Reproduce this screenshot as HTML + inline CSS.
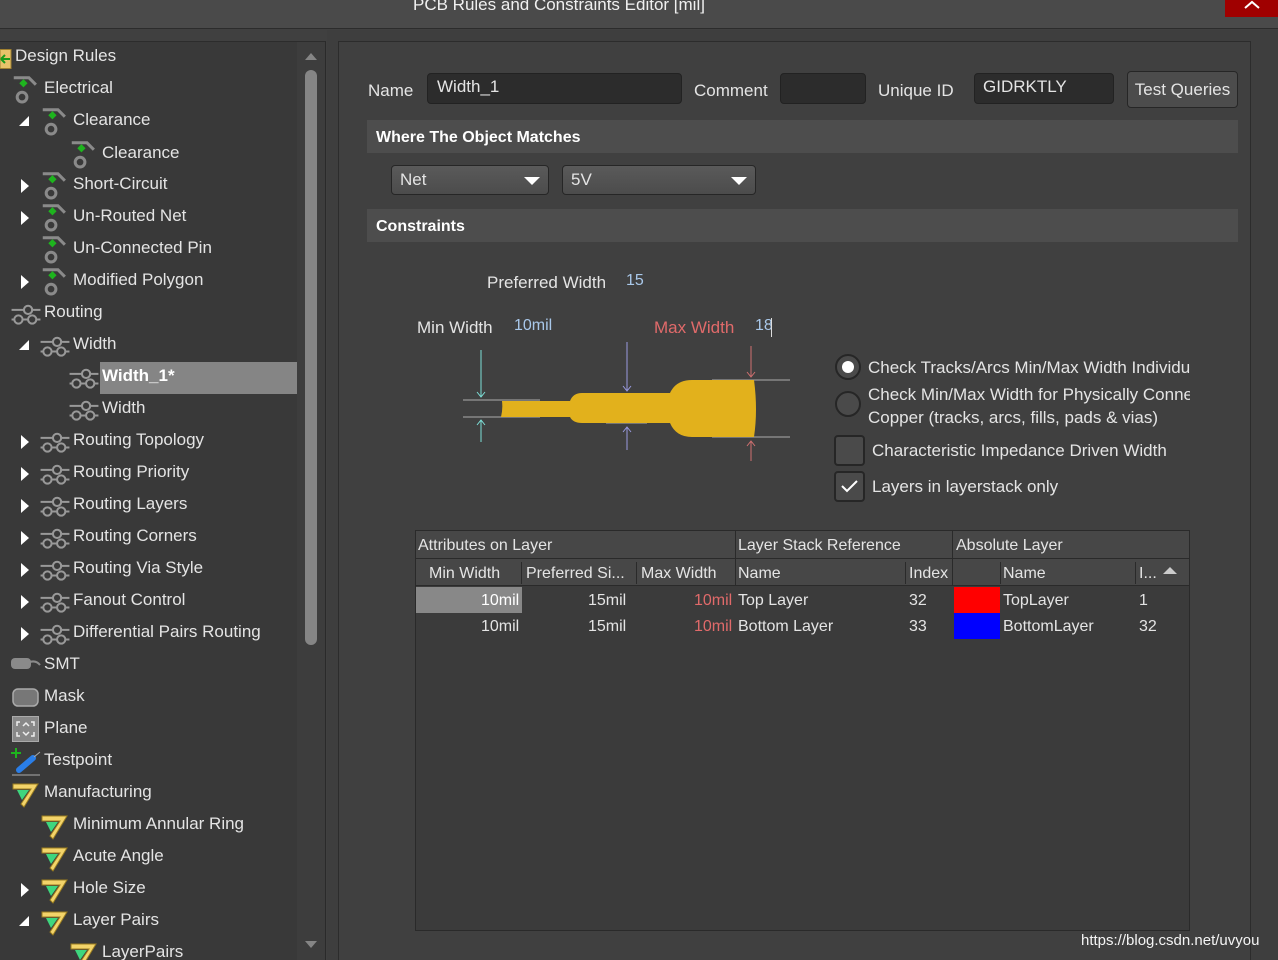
<!DOCTYPE html>
<html><head><meta charset="utf-8"><style>
*{margin:0;padding:0;box-sizing:border-box}
html,body{width:1278px;height:960px;overflow:hidden}
body{background:#404040;font-family:"Segoe UI","Liberation Sans",sans-serif;color:#e4e4e4;position:relative;font-size:16px}
.a{position:absolute;white-space:nowrap}
.t{position:absolute;white-space:nowrap;font-size:17px;line-height:20px;margin-top:1px}
.tri{position:absolute;width:0;height:0}
.tr{border-left:8px solid #fff;border-top:7px solid transparent;border-bottom:7px solid transparent}
.td{border-right:10px solid #fff;border-top:10px solid transparent}
.inp{position:absolute;background:#2c2c2c;border:1px solid #222;border-radius:4px}
.hdr{position:absolute;left:367px;width:871px;height:33px;background:#4d4d4d;font-weight:bold;font-size:16px;padding-left:9px;line-height:33px;color:#fff}
.dd{position:absolute;height:30px;border:1px solid #262626;border-radius:4px;background:linear-gradient(#5a5a5a,#4c4c4c);font-size:17px;line-height:28px;padding-left:8px}
.dd:after{content:"";position:absolute;right:8px;top:11px;border-left:8px solid transparent;border-right:8px solid transparent;border-top:8px solid #fff}
.c{position:absolute;font-size:16px;line-height:27px;white-space:nowrap}
</style></head><body>
<svg width="0" height="0" style="position:absolute">
<defs>
<g id="el"><path d="M1 2 H12 L17 7" stroke="#8a8a8a" stroke-width="2.2" fill="none"/><path d="M8 3 l3 3 -3 3 -3 -3z" fill="#1eb41e"/><circle cx="7" cy="16" r="3.5" fill="none" stroke="#8a8a8a" stroke-width="2.2"/></g>
<g id="ro"><path d="M1 5H22M1 12H22" stroke="#999" stroke-width="1.5"/><circle cx="13" cy="5" r="3" fill="#393939" stroke="#999" stroke-width="1.5"/><circle cx="6" cy="12" r="3" fill="#393939" stroke="#999" stroke-width="1.5"/><circle cx="16" cy="12" r="3" fill="#393939" stroke="#999" stroke-width="1.5"/></g>
<g id="mf"><path d="M2 3 H27 L13 26 L10 23 L20 8 H2z" fill="#f3d46a" stroke="#9b7d20" stroke-width="1"/><path d="M6 9 H18 L11 19z" fill="#3ed67e"/></g>
</defs></svg>
<!-- title bar -->
<div class="a" style="left:0;top:0;width:1278px;height:29px;background:#4a4a4a;border-bottom:1px solid #2c2c2c"></div>
<div class="a" style="left:413px;top:-5px;font-size:17px;color:#f0f0f0">PCB Rules and Constraints Editor [mil]</div>
<div class="a" style="left:1225px;top:0;width:53px;height:17px;background:#a00000"></div>
<svg class="a" style="left:1243px;top:0" width="18" height="10"><path d="M2 8L9 2L16 8" stroke="#fff" stroke-width="2" fill="none"/></svg>
<!-- left panel -->
<div class="a" style="left:0;top:41px;width:326px;height:919px;background:#393939;border-top:1px solid #2c2c2c;border-right:1px solid #2a2a2a"></div>
<div class="a" style="left:297px;top:42px;width:28px;height:918px;background:#3d3d3d"></div>
<div class="a" style="left:305px;top:70px;width:12px;height:575px;background:#858585;border-radius:6px"></div>
<div class="a" style="left:305px;top:53px;border-left:6px solid transparent;border-right:6px solid transparent;border-bottom:7px solid #858585"></div>
<div class="a" style="left:305px;top:941px;border-left:6px solid transparent;border-right:6px solid transparent;border-top:7px solid #858585"></div>
<div class="a" style="left:100px;top:362px;width:197px;height:32px;background:#858585"></div>
<!-- tree -->
<svg class="a" style="left:0;top:49px" width="12" height="20"><rect x="0" y="0.5" width="11" height="19" fill="#e8c36a" stroke="#a08030"/><path d="M1 10H10M1 10l4-4M1 10l4 4" stroke="#1a9a1a" stroke-width="2" fill="none"/></svg>
<div class="t" style="left:15px;top:45px">Design Rules</div>
<svg class="a" style="left:12px;top:75px" width="27" height="29" viewBox="0 0 19 21"><use href="#el"/></svg><div class="t" style="left:44px;top:77px">Electrical</div>
<div class="tri td" style="left:19px;top:116px"></div>
<svg class="a" style="left:41px;top:107px" width="27" height="29" viewBox="0 0 19 21"><use href="#el"/></svg><div class="t" style="left:73px;top:109px">Clearance</div>
<svg class="a" style="left:70px;top:140px" width="27" height="29" viewBox="0 0 19 21"><use href="#el"/></svg><div class="t" style="left:102px;top:142px">Clearance</div>
<div class="tri tr" style="left:21px;top:179px"></div>
<svg class="a" style="left:41px;top:171px" width="27" height="29" viewBox="0 0 19 21"><use href="#el"/></svg><div class="t" style="left:73px;top:173px">Short-Circuit</div>
<div class="tri tr" style="left:21px;top:211px"></div>
<svg class="a" style="left:41px;top:203px" width="27" height="29" viewBox="0 0 19 21"><use href="#el"/></svg><div class="t" style="left:73px;top:205px">Un-Routed Net</div>
<svg class="a" style="left:41px;top:235px" width="27" height="29" viewBox="0 0 19 21"><use href="#el"/></svg><div class="t" style="left:73px;top:237px">Un-Connected Pin</div>
<div class="tri tr" style="left:21px;top:275px"></div>
<svg class="a" style="left:41px;top:267px" width="27" height="29" viewBox="0 0 19 21"><use href="#el"/></svg><div class="t" style="left:73px;top:269px">Modified Polygon</div>
<svg class="a" style="left:10px;top:303px" width="32" height="22" viewBox="0 0 23 16"><use href="#ro"/></svg><div class="t" style="left:44px;top:301px">Routing</div>
<div class="tri td" style="left:19px;top:340px"></div>
<svg class="a" style="left:39px;top:335px" width="32" height="22" viewBox="0 0 23 16"><use href="#ro"/></svg><div class="t" style="left:73px;top:333px">Width</div>
<svg class="a" style="left:68px;top:367px" width="32" height="22" viewBox="0 0 23 16"><use href="#ro"/></svg><div class="t" style="left:102px;top:365px;font-weight:bold;color:#fff">Width_1*</div>
<svg class="a" style="left:68px;top:399px" width="32" height="22" viewBox="0 0 23 16"><use href="#ro"/></svg><div class="t" style="left:102px;top:397px">Width</div>
<div class="tri tr" style="left:21px;top:435px"></div><svg class="a" style="left:39px;top:431px" width="32" height="22" viewBox="0 0 23 16"><use href="#ro"/></svg><div class="t" style="left:73px;top:429px">Routing Topology</div>
<div class="tri tr" style="left:21px;top:467px"></div><svg class="a" style="left:39px;top:463px" width="32" height="22" viewBox="0 0 23 16"><use href="#ro"/></svg><div class="t" style="left:73px;top:461px">Routing Priority</div>
<div class="tri tr" style="left:21px;top:499px"></div><svg class="a" style="left:39px;top:495px" width="32" height="22" viewBox="0 0 23 16"><use href="#ro"/></svg><div class="t" style="left:73px;top:493px">Routing Layers</div>
<div class="tri tr" style="left:21px;top:531px"></div><svg class="a" style="left:39px;top:527px" width="32" height="22" viewBox="0 0 23 16"><use href="#ro"/></svg><div class="t" style="left:73px;top:525px">Routing Corners</div>
<div class="tri tr" style="left:21px;top:563px"></div><svg class="a" style="left:39px;top:559px" width="32" height="22" viewBox="0 0 23 16"><use href="#ro"/></svg><div class="t" style="left:73px;top:557px">Routing Via Style</div>
<div class="tri tr" style="left:21px;top:595px"></div><svg class="a" style="left:39px;top:591px" width="32" height="22" viewBox="0 0 23 16"><use href="#ro"/></svg><div class="t" style="left:73px;top:589px">Fanout Control</div>
<div class="tri tr" style="left:21px;top:627px"></div><svg class="a" style="left:39px;top:623px" width="32" height="22" viewBox="0 0 23 16"><use href="#ro"/></svg><div class="t" style="left:73px;top:621px">Differential Pairs Routing</div>
<svg class="a" style="left:10px;top:656px" width="32" height="16"><rect x="1" y="2" width="20" height="11" rx="4" fill="#8a8a8a"/><path d="M20 6 Q26 4 30 9" stroke="#8a8a8a" stroke-width="2" fill="none"/></svg><div class="t" style="left:44px;top:653px">SMT</div>
<svg class="a" style="left:12px;top:688px" width="28" height="20"><rect x="1" y="1" width="25" height="17" rx="5" fill="#777" stroke="#aaa" stroke-width="1.5"/></svg><div class="t" style="left:44px;top:685px">Mask</div>
<svg class="a" style="left:12px;top:716px" width="28" height="26"><rect x="0.5" y="0.5" width="26" height="25" fill="#888" stroke="#aaa"/><path d="M8 6H5V10M19 6H22V10M8 20H5V16M19 20H22V16M11 10l3-3 3 3M11 16l3 3 3-3" stroke="#eee" stroke-width="1.5" fill="none"/></svg><div class="t" style="left:44px;top:717px">Plane</div>
<svg class="a" style="left:9px;top:748px" width="34" height="28"><path d="M2 5H12M7 0V10" stroke="#1eb41e" stroke-width="2"/><path d="M10 22 L24 10" stroke="#2a7ee8" stroke-width="6" stroke-linecap="round"/><path d="M25 9L31 4" stroke="#aaa"/><path d="M3 27H31" stroke="#aaa"/></svg><div class="t" style="left:44px;top:749px">Testpoint</div>
<svg class="a" style="left:11px;top:781px" width="30" height="28"><use href="#mf"/></svg><div class="t" style="left:44px;top:781px">Manufacturing</div>
<svg class="a" style="left:40px;top:813px" width="30" height="28"><use href="#mf"/></svg><div class="t" style="left:73px;top:813px">Minimum Annular Ring</div>
<svg class="a" style="left:40px;top:845px" width="30" height="28"><use href="#mf"/></svg><div class="t" style="left:73px;top:845px">Acute Angle</div>
<div class="tri tr" style="left:21px;top:883px"></div><svg class="a" style="left:40px;top:877px" width="30" height="28"><use href="#mf"/></svg><div class="t" style="left:73px;top:877px">Hole Size</div>
<div class="tri td" style="left:19px;top:916px"></div><svg class="a" style="left:40px;top:909px" width="30" height="28"><use href="#mf"/></svg><div class="t" style="left:73px;top:909px">Layer Pairs</div>
<svg class="a" style="left:69px;top:941px" width="30" height="28"><use href="#mf"/></svg><div class="t" style="left:102px;top:941px">LayerPairs</div>
<!-- right panel -->
<div class="a" style="left:327px;top:30px;width:951px;height:930px;background:#3e3e3e"></div>
<div class="a" style="left:338px;top:41px;width:913px;height:919px;background:#404040;border:1px solid #2c2c2c;border-bottom:none"></div>
<div class="a" style="left:368px;top:81px;font-size:17px">Name</div>
<div class="inp" style="left:427px;top:73px;width:255px;height:31px"></div>
<div class="a" style="left:437px;top:77px;font-size:17px">Width_1</div>
<div class="a" style="left:694px;top:81px;font-size:17px">Comment</div>
<div class="inp" style="left:780px;top:73px;width:86px;height:31px"></div>
<div class="a" style="left:878px;top:81px;font-size:17px">Unique ID</div>
<div class="inp" style="left:974px;top:73px;width:140px;height:31px"></div>
<div class="a" style="left:983px;top:77px;font-size:17px">GIDRKTLY</div>
<div class="a" style="left:1127px;top:71px;width:111px;height:37px;background:#4c4c4c;border:1px solid #262626;border-radius:4px;font-size:17px;line-height:35px;text-align:center">Test Queries</div>
<div class="hdr" style="top:120px;line-height:35px">Where The Object Matches</div>
<div class="dd" style="left:391px;top:165px;width:158px">Net</div>
<div class="dd" style="left:562px;top:165px;width:194px">5V</div>
<div class="hdr" style="top:209px;line-height:35px">Constraints</div>
<div class="a" style="left:487px;top:273px;font-size:17px">Preferred Width</div>
<div class="a" style="left:626px;top:272px;font-size:16px;color:#a9c8ea">15</div>
<div class="a" style="left:417px;top:318px;font-size:17px">Min Width</div>
<div class="a" style="left:514px;top:317px;font-size:16px;color:#a9c8ea">10mil</div>
<div class="a" style="left:654px;top:318px;font-size:17px;color:#e06a6a">Max Width</div>
<div class="a" style="left:755px;top:317px;font-size:16px;color:#a9c8ea">18</div>
<div class="a" style="left:771px;top:318px;width:1px;height:19px;background:#ddd"></div>
<svg class="a" style="left:0;top:0" width="800" height="470">
<path d="M463 400H540M463 417H540M606 423H647M712 380H790M712 437H790" stroke="#888" stroke-width="1.5"/>
<path d="M502 401H570 Q573 393 582 393 H670 Q676 380 692 380 H754 Q758 410 754 437 H692 Q676 437 670 423 H582 Q573 423 570 417 H501 Q503 409 502 401Z" fill="#e2b11c"/>
<g stroke="#7de0d8" fill="none"><path d="M481 350V397M477 392l4 5 4-5M481 442V420M477 425l4-5 4 5"/></g>
<g stroke="#9a9ae0" fill="none"><path d="M627 342V391M623 386l4 5 4-5M627 450V427M623 432l4-5 4 5"/></g>
<g stroke="#d07070" fill="none"><path d="M751 346V377M747 372l4 5 4-5M751 461V441M747 446l4-5 4 5"/></g>
</svg>
<svg class="a" style="left:834px;top:353px" width="30" height="68"><circle cx="14" cy="14" r="12" fill="#4a4a4a" stroke="#262626" stroke-width="2"/><circle cx="14" cy="14" r="6" fill="#fff"/><circle cx="14" cy="51" r="12" fill="#4a4a4a" stroke="#262626" stroke-width="2"/></svg>
<div class="a" style="left:868px;top:358px;font-size:17px;width:322px;overflow:hidden">Check Tracks/Arcs Min/Max Width Individually</div>
<div class="a" style="left:868px;top:385px;font-size:17px;width:322px;overflow:hidden">Check Min/Max Width for Physically Connected</div>
<div class="a" style="left:868px;top:408px;font-size:17px">Copper (tracks, arcs, fills, pads &amp; vias)</div>
<div class="a" style="left:834px;top:435px;width:31px;height:31px;background:#4a4a4a;border:2px solid #262626;border-radius:4px"></div>
<div class="a" style="left:872px;top:441px;font-size:17px">Characteristic Impedance Driven Width</div>
<div class="a" style="left:834px;top:471px;width:31px;height:31px;background:#4a4a4a;border:2px solid #262626;border-radius:4px"></div>
<svg class="a" style="left:840px;top:478px" width="20" height="16"><path d="M2 8L7 13L17 3" stroke="#fff" stroke-width="2" fill="none"/></svg>
<div class="a" style="left:872px;top:477px;font-size:17px">Layers in layerstack only</div>
<!-- table -->
<div class="a" style="left:415px;top:530px;width:775px;height:401px;background:#3b3b3b;border:1px solid #2a2a2a"></div>
<div class="a" style="left:416px;top:531px;width:773px;height:55px;background:#474747;border-bottom:1px solid #2a2a2a"></div>
<div class="a" style="left:416px;top:558px;width:773px;height:1px;background:#2a2a2a"></div>
<div class="a" style="left:735px;top:531px;width:1px;height:55px;background:#2a2a2a"></div>
<div class="a" style="left:952px;top:531px;width:1px;height:55px;background:#2a2a2a"></div>
<div class="a" style="left:521px;top:562px;width:1px;height:22px;background:#2a2a2a"></div>
<div class="a" style="left:636px;top:562px;width:1px;height:22px;background:#2a2a2a"></div>
<div class="a" style="left:905px;top:562px;width:1px;height:22px;background:#2a2a2a"></div>
<div class="a" style="left:1000px;top:562px;width:1px;height:22px;background:#2a2a2a"></div>
<div class="a" style="left:1135px;top:562px;width:1px;height:22px;background:#2a2a2a"></div>
<div class="c" style="left:418px;top:532px">Attributes on Layer</div>
<div class="c" style="left:738px;top:532px">Layer Stack Reference</div>
<div class="c" style="left:956px;top:532px">Absolute Layer</div>
<div class="c" style="left:429px;top:560px">Min Width</div>
<div class="c" style="left:526px;top:560px">Preferred Si...</div>
<div class="c" style="left:641px;top:560px">Max Width</div>
<div class="c" style="left:738px;top:560px">Name</div>
<div class="c" style="left:909px;top:560px">Index</div>
<div class="c" style="left:1003px;top:560px">Name</div>
<div class="c" style="left:1139px;top:560px">I...</div>
<div class="a" style="left:1163px;top:567px;border-left:7px solid transparent;border-right:7px solid transparent;border-bottom:7px solid #ccc"></div>
<div class="a" style="left:416px;top:587px;width:106px;height:26px;background:#888"></div>
<div class="a" style="left:954px;top:587px;width:46px;height:26px;background:#f00"></div>
<div class="a" style="left:954px;top:613px;width:46px;height:26px;background:#00f"></div>
<div class="c" style="left:481px;top:587px;color:#fff">10mil</div>
<div class="c" style="left:588px;top:587px">15mil</div>
<div class="c" style="left:694px;top:587px;color:#e06a6a">10mil</div>
<div class="c" style="left:738px;top:587px">Top Layer</div>
<div class="c" style="left:909px;top:587px">32</div>
<div class="c" style="left:1003px;top:587px">TopLayer</div>
<div class="c" style="left:1139px;top:587px">1</div>
<div class="c" style="left:481px;top:613px">10mil</div>
<div class="c" style="left:588px;top:613px">15mil</div>
<div class="c" style="left:694px;top:613px;color:#e06a6a">10mil</div>
<div class="c" style="left:738px;top:613px">Bottom Layer</div>
<div class="c" style="left:909px;top:613px">33</div>
<div class="c" style="left:1003px;top:613px">BottomLayer</div>
<div class="c" style="left:1139px;top:613px">32</div>
<div class="a" style="left:1081px;top:932px;font-size:15px;color:#f4f4f4">https://blog.csdn.net/uvyou</div>
</body></html>
